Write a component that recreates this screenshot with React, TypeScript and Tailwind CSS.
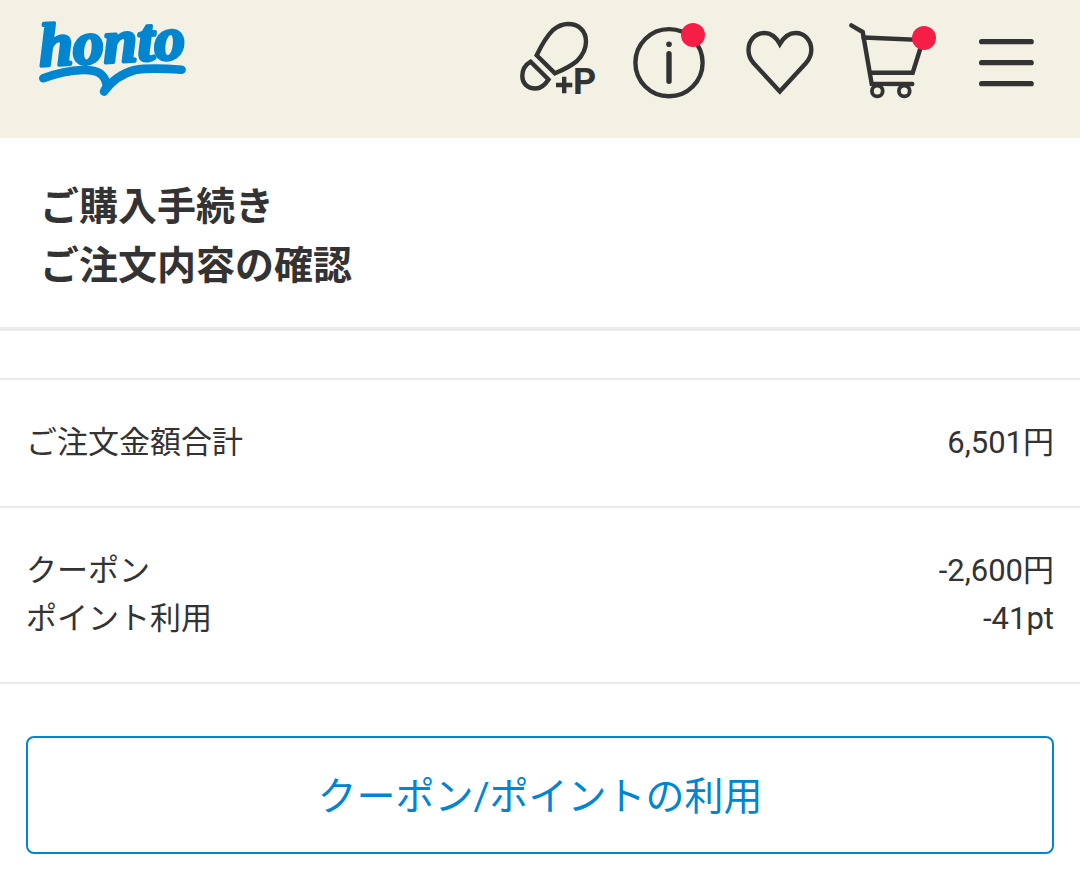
import type { ReactNode } from 'react'

const rows = [
  [{ label: 'ご注文金額合計', value: '6,501円' }],
  [
    { label: 'クーポン', value: '-2,600円' },
    { label: 'ポイント利用', value: '-41pt' },
  ],
]

function Logo() {
  return (
    <svg viewBox="0 0 150 80" className="w-[150px] h-20 overflow-visible" fill="#0086d1" stroke="#0086d1" strokeLinecap="round" strokeLinejoin="round">
      <text
        x="2"
        y="46"
        transform="rotate(-3 2 46)"
        strokeWidth="3.4"
        className="font-['Liberation_Serif',serif] font-bold italic text-[61px]"
      >
        honto
      </text>
      <path
        d="M5.3 58.3C18 53.5 32 50.4 45 50C60 49.6 67 54 69 66L66 71.5C74 60 84 53.5 97 50C110 47.5 127 48.5 143.6 49.7"
        fill="none"
        strokeWidth="8.6"
      />
    </svg>
  )
}

function IconLink({ label, children }: { label: string; children: ReactNode }) {
  return (
    <a href="#" aria-label={label} className="w-[88px] shrink">
      <svg viewBox="0 0 88 80" className="w-full h-20 overflow-visible" fill="none" stroke="#333" strokeWidth="4.4" strokeLinecap="round">
        {children}
      </svg>
    </a>
  )
}

function Header() {
  return (
    <header className="flex items-start justify-between bg-[#f3f1e4] pt-5 pb-[38px] pl-[38px] pr-[30px]">
      <a href="#" aria-label="honto">
        <Logo />
      </a>
      <nav className="flex gap-6">
        <IconLink label="ポイント">
          <path d="M22.7 35.3C28 24 34 15 39 10C44 6 49 4 54 4C65 4 72 11 72 21.5C72 30 68 36 63 41C57 46 49 50 41 53.3Z" />
          <path d="M16.7 41.7L34.5 59.5C31 65 27 68.5 21.5 68.5C13 68.5 8.3 63 8.3 56C8.3 50 11 45 16.7 41.7Z" />
          <path d="M42 65H58.3M50.2 56.8V73.2" strokeLinecap="butt" />
          <text x="59" y="74" fill="#333" stroke="none" className="font-[Roboto,sans-serif] font-bold text-[36px]">
            P
          </text>
        </IconLink>
        <IconLink label="お知らせ">
          <circle cx="43" cy="42.7" r="33.6" />
          <circle cx="43" cy="24.3" r="2.8" fill="#333" stroke="none" />
          <path d="M43 33.8V61.2" strokeWidth="5.4" />
          <circle cx="67" cy="15" r="12" fill="#f41e46" stroke="none" />
        </IconLink>
        <IconLink label="ほしい本">
          <path d="M41.8 24C38 17 33 13 26.5 13C17 13 10.5 20.5 10.5 30C10.5 35 12 39 15.5 43L41.8 71.5L68 43C71.5 39 73.3 35 73.3 30C73.3 20.5 67 13 57.5 13C51 13 46 17 41.8 24Z" />
        </IconLink>
        <IconLink label="カート">
          <path d="M1.3 5.3L12.7 12L21.7 63.8L62.3 64" strokeWidth="4.4" />
          <path d="M13.5 17.5L73 20L62.7 52.7H20" strokeWidth="4.4" />
          <circle cx="27.3" cy="71" r="5.4" strokeWidth="3.8" />
          <circle cx="54.3" cy="71" r="5.4" strokeWidth="3.8" />
          <circle cx="74" cy="18" r="12" fill="#f41e46" stroke="none" />
        </IconLink>
        <button type="button" aria-label="メニュー" className="w-[88px] shrink">
          <svg viewBox="0 0 88 80" className="w-full h-20" stroke="#333" strokeWidth="5.2" strokeLinecap="round">
            <path d="M19.6 21.7H69.2M19.6 42.7H69.2M19.6 63.7H69.2" />
          </svg>
        </button>
      </nav>
    </header>
  )
}

export default function App() {
  return (
    <div className="min-h-screen bg-white text-[#333] font-[Roboto,'Noto_Sans_CJK_JP',sans-serif]">
      <Header />
      <main lang="ja">
        <h1 className="px-10 pt-10 pb-[31px] border-b-4 border-[#ebebeb] text-[39px] leading-[59px] font-bold">
          ご購入手続き
          <br />
          ご注文内容の確認
        </h1>

        <div className="mt-[47px] border-t-2 border-[#ebebeb]">
          {rows.map((group, i) => (
            <dl key={i} className="px-[26px] py-[39px] border-b-2 border-[#ebebeb] text-[31px] leading-[48px]">
              {group.map(row => (
                <div key={row.label} className="flex justify-between">
                  <dt>{row.label}</dt>
                  <dd>{row.value}</dd>
                </div>
              ))}
            </dl>
          ))}
        </div>

        <div className="px-[26px] pt-[52px] pb-6">
          <button
            type="button"
            className="w-full rounded-lg border-2 border-[#0086d1] pt-[30px] pb-[26px] text-[39px] leading-[58px] text-[#0086d1]"
          >
            クーポン/ポイントの利用
          </button>
        </div>
      </main>
    </div>
  )
}
